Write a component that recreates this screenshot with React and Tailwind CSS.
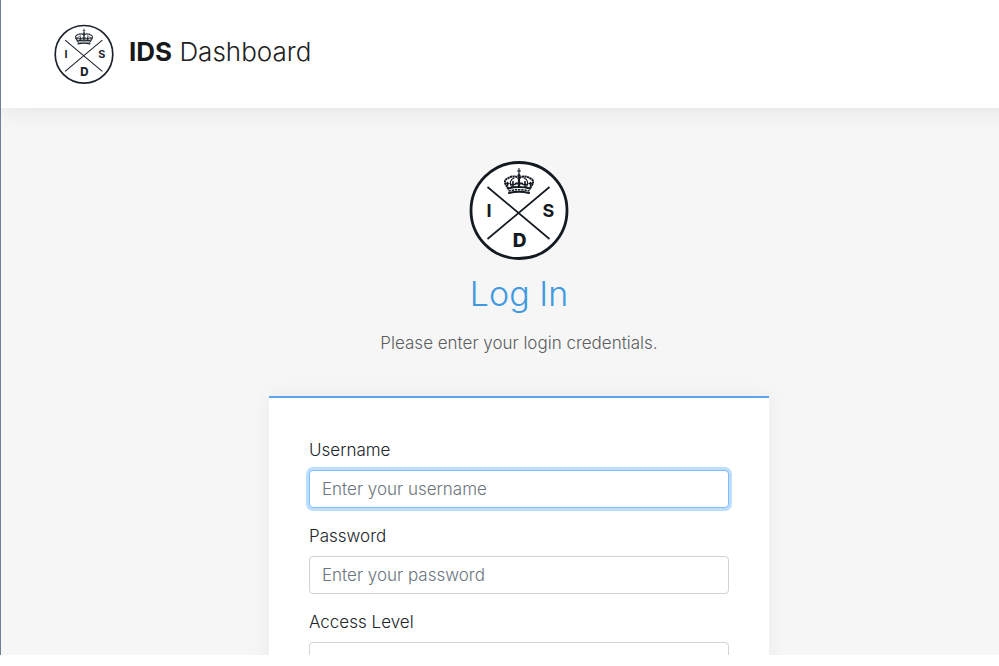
function Crown() {
  return (
    <g fill="none" stroke="currentColor" strokeLinecap="round" strokeLinejoin="round">
      <path d="M50 8.5v6M48.500 11h3" strokeWidth="1.2" />
      <circle cx="50" cy="15.5" r="1.6" fill="currentColor" stroke="none" />
      <path d="M40 29C35 24 34.800 19.800 38.500 18.500C43 15.500 48 16 50 18.500C52 16 57 15.500 61.500 18.500C65.200 19.800 65 24 60 29" strokeWidth="2" strokeDasharray="2.2 0.4" strokeLinecap="butt" />
      <path d="M42.500 27C40 23 41.500 19.500 45 18M57.500 27C60 23 58.500 19.500 55 18" strokeWidth="1.1" />
      <path d="M50 18v9M47 23.500h6" strokeWidth="2.2" />
      <path d="M44 21.500v5.500M42 24.500h4M56 21.500v5.500M54 24.500h4" strokeWidth="1.6" />
      <path d="M38.500 22.500v3M37 23.500h3M61.500 22.500v3M60 23.500h3" strokeWidth="1.5" />
      <path d="M38.800 28.500Q50 25.500 61.200 28.500" strokeWidth="2" />
      <path d="M39.500 31Q50 28.300 60.500 31" strokeWidth="1.5" strokeDasharray="2.4 0.800" strokeLinecap="butt" />
      <path d="M40 33Q50 30.600 60 33" strokeWidth="2" />
    </g>
  );
}

function Logo({ className }) {
  return (
    <svg viewBox="0 0 100 100" role="img" aria-label="IDS" className={className}>
      <circle cx="50" cy="50.500" r="48" fill="#fff" stroke="currentColor" strokeWidth="2.8" />
      <path d="M18.500 27L80.500 79M80.500 27L18.500 79" stroke="currentColor" strokeWidth="1.7" />
      <Crown />
      <g fill="currentColor" fontFamily="Inter, 'Open Sans', sans-serif" fontWeight="700" fontSize="18" textAnchor="middle">
        <text x="20" y="57">I</text>
        <text x="79.500" y="57">S</text>
        <text x="50.500" y="86.500" fontWeight="800" fontSize="19">D</text>
      </g>
    </svg>
  );
}

const control =
  "block h-[38px] w-full rounded border border-[#ced4da] bg-white leading-6 font-light text-[#495057] outline-none placeholder:text-[#6c757d] placeholder:opacity-100 focus:border-[#80bdff] focus:ring-3 focus:ring-[#bfdeff]";

function Field({ id, label, children }) {
  return (
    <div className="mb-4">
      <label htmlFor={id} className="mb-2 block leading-6">
        {label}
      </label>
      {children}
    </div>
  );
}

export default function App() {
  return (
    <div className="h-screen bg-white pb-[11px] font-['Inter','Open_Sans',sans-serif] text-[17px] font-light text-[#212529]">
      <div className="h-full overflow-hidden border-l border-[#718096] bg-[#f6f6f6]">
        <header className="-mr-10 flex items-center gap-[15px] bg-white py-6 pl-[53px] shadow-[0_0_24px_rgba(0,0,0,0.09)]">
          <Logo className="size-[60px] shrink-0 text-[#1b222b]" />
          <span className="pb-1 text-[26px] leading-9 text-[#212121]">
            <b className="font-bold text-[#16181b]">IDS</b> Dashboard
          </span>
        </header>
        <main className="flex flex-col items-center pt-[52px] pl-[38px]">
          <Logo className="size-[100px] text-[#141a22]" />
          <h1 className="mt-4 text-[34px] leading-9 text-[#4299e1]">Log In</h1>
          <p className="mt-[19px] leading-6 text-[#5b5e61]">Please enter your login credentials.</p>
          <form className="mt-[41px] w-full max-w-[500px] border-t-2 border-[#5ba4f0] bg-white p-10 shadow-[0_0_20px_rgba(0,0,0,0.05)]">
            <Field id="username" label="Username">
              <input id="username" type="text" autoFocus placeholder="Enter your username" className={control + " px-3 text-[17px] caret-transparent"} />
            </Field>
            <Field id="password" label="Password">
              <input id="password" type="password" placeholder="Enter your password" className={control + " px-3 text-[17px]"} />
            </Field>
            <Field id="access" label="Access Level">
              <select id="access" className={control + " appearance-none px-4 pt-1 text-[17px]"}>
                <option>Select access role</option>
              </select>
            </Field>
          </form>
        </main>
      </div>
    </div>
  );
}
